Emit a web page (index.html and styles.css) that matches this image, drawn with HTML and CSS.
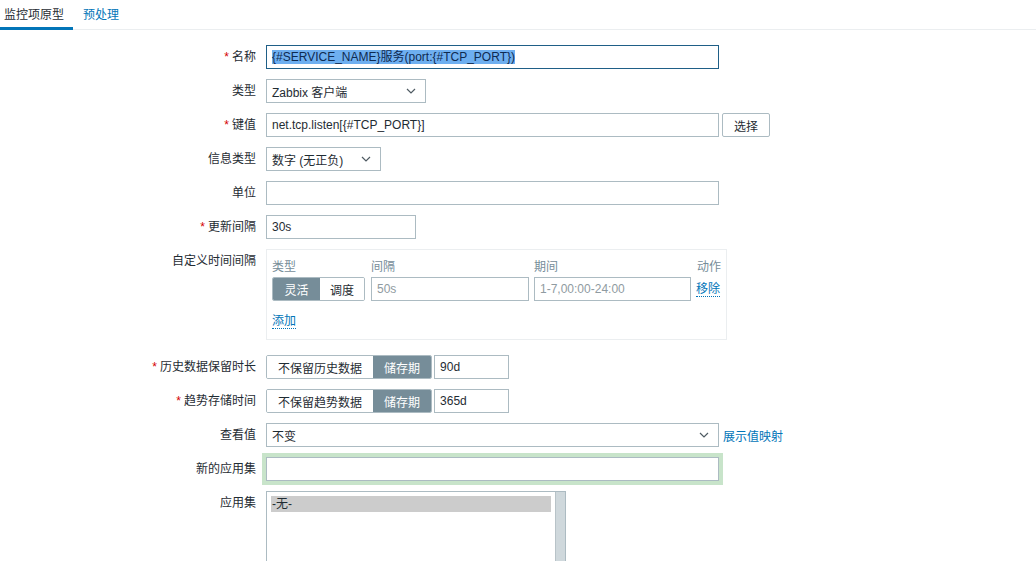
FILE: index.html
```html
<!DOCTYPE html>
<html lang="zh-CN">
<head>
<meta charset="utf-8">
<title>监控项原型</title>
<link rel="stylesheet" href="styles.css">
</head>
<body>
<nav class="tabs">
  <span class="tab tab-active">监控项原型</span>
  <a class="tab tab-link">预处理</a>
</nav>
<form class="form">
  <div class="row">
    <label class="lbl"><span class="req">*</span>名称</label>
    <div class="field">
      <div class="input w-wide focused"><span class="sel">{#SERVICE_NAME}服务(port:{#TCP_PORT})</span></div>
    </div>
  </div>
  <div class="row">
    <label class="lbl">类型</label>
    <div class="field">
      <div class="select w-type"><span>Zabbix 客户端</span><svg class="chev" width="10" height="6" viewBox="0 0 10 6"><path d="M1 1l4 4 4-4" fill="none" stroke="#4f5b63" stroke-width="1.2"/></svg></div>
    </div>
  </div>
  <div class="row">
    <label class="lbl"><span class="req">*</span>键值</label>
    <div class="field">
      <div class="input w-wide">net.tcp.listen[{#TCP_PORT}]</div>
      <button type="button" class="btn">选择</button>
    </div>
  </div>
  <div class="row">
    <label class="lbl">信息类型</label>
    <div class="field">
      <div class="select w-info"><span>数字 (无正负)</span><svg class="chev" width="10" height="6" viewBox="0 0 10 6"><path d="M1 1l4 4 4-4" fill="none" stroke="#4f5b63" stroke-width="1.2"/></svg></div>
    </div>
  </div>
  <div class="row">
    <label class="lbl">单位</label>
    <div class="field"><div class="input w-wide"></div></div>
  </div>
  <div class="row">
    <label class="lbl"><span class="req">*</span>更新间隔</label>
    <div class="field"><div class="input w-upd">30s</div></div>
  </div>
  <div class="row row-top row-ci">
    <label class="lbl">自定义时间间隔</label>
    <div class="field">
      <div class="ci-box">
        <div class="ci-head">
          <span class="c1">类型</span><span class="c2">间隔</span><span class="c3">期间</span><span class="c4">动作</span>
        </div>
        <div class="ci-row">
          <div class="seg c1"><span class="seg-btn on">灵活</span><span class="seg-btn">调度</span></div>
          <div class="input ph c2i">50s</div>
          <div class="input ph c3i">1-7,00:00-24:00</div>
          <a class="dlink">移除</a>
        </div>
        <div class="ci-add"><a class="dlink">添加</a></div>
      </div>
    </div>
  </div>
  <div class="row">
    <label class="lbl"><span class="req">*</span>历史数据保留时长</label>
    <div class="field">
      <div class="seg"><span class="seg-btn">不保留历史数据</span><span class="seg-btn on">储存期</span></div>
      <div class="input w-keep">90d</div>
    </div>
  </div>
  <div class="row">
    <label class="lbl"><span class="req">*</span>趋势存储时间</label>
    <div class="field">
      <div class="seg"><span class="seg-btn">不保留趋势数据</span><span class="seg-btn on">储存期</span></div>
      <div class="input w-keep">365d</div>
    </div>
  </div>
  <div class="row">
    <label class="lbl">查看值</label>
    <div class="field">
      <div class="select w-wide"><span>不变</span><svg class="chev" width="10" height="6" viewBox="0 0 10 6"><path d="M1 1l4 4 4-4" fill="none" stroke="#4f5b63" stroke-width="1.2"/></svg></div>
      <a class="link">展示值映射</a>
    </div>
  </div>
  <div class="row">
    <label class="lbl">新的应用集</label>
    <div class="field"><div class="input w-wide glow"></div></div>
  </div>
  <div class="row row-top">
    <label class="lbl">应用集</label>
    <div class="field">
      <div class="listbox">
        <div class="list-items"><div class="list-item">-无-</div></div>
        <div class="scrollbar"></div>
      </div>
    </div>
  </div>
</form>
</body>
</html>
```
FILE: styles.css
```css
* { box-sizing: border-box; }
html, body { margin: 0; padding: 0; background: #fff; }
body {
  font-family: "Liberation Sans", Arial, "Noto Sans CJK SC", sans-serif;
  font-size: 12px;
  color: #1f2c33;
  overflow: hidden;
}
.tabs {
  display: flex;
  height: 30px;
  border-bottom: 1px solid #ebeef0;
}
.tab {
  display: flex;
  align-items: center;
  height: 29px;
  padding: 0 10px 3px;
  font-size: 12px;
}
.tab-active {
  padding: 0 9px 0 4px;
  border-bottom: 3px solid #0275b8;
  height: 30px;
  margin-bottom: -1px;
}
.tab-link { color: #0275b8; }
.form {
  padding-top: 15px;
  display: flex;
  flex-direction: column;
  gap: 10px;
}
.row {
  display: flex;
  align-items: center;
  min-height: 24px;
}
.row-top { align-items: flex-start; }
.row-ci { margin-bottom: 5px; }
.lbl {
  width: 266px;
  padding-right: 10px;
  text-align: right;
  line-height: 24px;
  white-space: nowrap;
}
.req { color: #d40000; margin-right: 3px; }
.field {
  display: flex;
  align-items: center;
  gap: 3px;
}
.input {
  height: 24px;
  border: 1px solid #acbbc2;
  background: #fff;
  padding: 0 5px;
  line-height: 22px;
  white-space: nowrap;
  overflow: hidden;
}
.ph { color: #8f9ba1; }
.focused { border-color: #1f5f87; }
.sel { background: #6eaff0; color: #0e2a50; }
.w-wide { width: 453px; }
.w-upd { width: 150px; }
.w-keep { width: 75px; margin-left: -1px; }
.glow { box-shadow: 0 0 0 4px #c8e4ca; }
.select {
  height: 24px;
  border: 1px solid #acbbc2;
  background: #fff;
  padding: 0 9px 0 5px;
  display: flex;
  align-items: center;
  justify-content: space-between;
}
.w-type { width: 160px; }
.w-info { width: 115px; }
.chev { flex: none; }
.btn {
  height: 24px;
  width: 48px;
  border: 1px solid #acbbc2;
  border-radius: 2px;
  background: #fff;
  font: inherit;
  color: #1f2c33;
  padding: 0;
}
.link { color: #0275b8; margin-left: 1px; white-space: nowrap; }
.dlink {
  color: #0275b8;
  border-bottom: 1px dotted #0275b8;
  line-height: 14px;
  white-space: nowrap;
}
.ci-box {
  width: 461px;
  height: 91px;
  border: 1px solid #ebeef0;
  padding: 3px 5px 0;
}
.ci-head {
  display: flex;
  height: 24px;
  align-items: center;
  color: #768d99;
  white-space: nowrap;
}
.ci-head .c1 { width: 99px; }
.ci-head .c2 { width: 163px; }
.ci-head .c3 { width: 163px; }
.ci-row {
  display: flex;
  align-items: center;
  gap: 5px;
}
.seg {
  display: flex;
  height: 24px;
  border: 1px solid #acbbc2;
  border-radius: 2px;
  overflow: hidden;
  white-space: nowrap;
}
.seg-btn {
  display: flex;
  align-items: center;
  padding: 0 11px;
  background: #fff;
  color: #1f2c33;
}
.seg-btn.on { background: #768d99; color: #fff; }
.ci-row .seg { width: 93px; margin-right: 1px; }
.ci-row .seg-btn:first-child { width: 47px; justify-content: center; padding: 0; }
.ci-row .seg-btn:last-child { flex: 1; justify-content: center; padding: 0; }
.c2i { width: 158px; }
.c3i { width: 157px; }
.ci-add { padding-top: 13px; }
.listbox {
  width: 300px;
  height: 110px;
  border: 1px solid #acbbc2;
  display: flex;
}
.list-items { flex: 1; padding: 4px 4px 0 4px; }
.list-item {
  background: #cccccc;
  height: 16px;
  line-height: 16px;
  padding-left: 1px;
}
.scrollbar {
  width: 10px;
  background: #cfd8dc;
  border-left: 1px solid #b8c3c8;
}
```
